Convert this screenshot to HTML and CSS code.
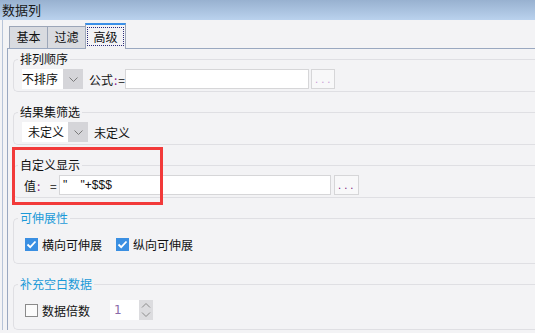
FILE: index.html
```html
<!DOCTYPE html>
<html lang="zh">
  <head>
    <meta charset="UTF-8" />
    <title>数据列</title>
    <link rel="stylesheet" href="styles.css">
  </head>
  <body>
    <div class="title">数据列</div>
    <div class="window">
      <div class="tabs">
        <div class="tab">基本</div>
        <div class="tab">过滤</div>
        <div class="tab active"><span class="focus">高级</span></div>
      </div>
      <div class="panel">
        <fieldset class="group">
          <legend>排列顺序</legend>
          <div class="row">
            <div class="combo w40">
              <span class="combo-text">不排序</span>
              <span class="combo-btn">
                <svg width="9" height="5" viewBox="0 0 9 5"><path d="M0.5 0.5 L4.5 4.5 L8.5 0.5" fill="none" stroke="#7a7a7a" stroke-width="1"/></svg>
              </span>
            </div>
            <span class="formula-label">公式<span class="colon">:</span>=</span>
            <div class="input w184"></div>
            <div class="dots light">...</div>
          </div>
        </fieldset>

        <fieldset class="group">
          <legend>结果集筛选</legend>
          <div class="row">
            <div class="combo w46">
              <span class="combo-text pad">未定义</span>
              <span class="combo-btn">
                <svg width="9" height="5" viewBox="0 0 9 5"><path d="M0.5 0.5 L4.5 4.5 L8.5 0.5" fill="none" stroke="#7a7a7a" stroke-width="1"/></svg>
              </span>
            </div>
            <span class="after-combo">未定义</span>
          </div>
        </fieldset>

        <fieldset class="group">
          <legend>自定义显示</legend>
          <div class="row">
            <span class="value-label">值<span class="colon">:</span></span>
            <span class="eq">=</span>
            <div class="input w272"><span class="input-text">"&nbsp;&nbsp;&nbsp;&nbsp;"+$$$</span></div>
            <div class="dots dark">...</div>
          </div>
        </fieldset>

        <fieldset class="group blue loose">
          <legend>可伸展性</legend>
          <div class="row">
            <span class="check on">
              <svg width="13" height="13" viewBox="0 0 13 13"><path d="M2.5 6.5 L5.2 9.2 L10.5 3.5" fill="none" stroke="#fff" stroke-width="1.8"/></svg>
            </span>
            <span class="check-label">横向可伸展</span>
            <span class="check on second">
              <svg width="13" height="13" viewBox="0 0 13 13"><path d="M2.5 6.5 L5.2 9.2 L10.5 3.5" fill="none" stroke="#fff" stroke-width="1.8"/></svg>
            </span>
            <span class="check-label">纵向可伸展</span>
          </div>
        </fieldset>

        <fieldset class="group blue loose">
          <legend>补充空白数据</legend>
          <div class="row">
            <span class="check"></span>
            <span class="check-label">数据倍数</span>
            <div class="spinner">
              <span class="spin-text">1</span>
              <span class="spin-btn">
                <svg width="14" height="20" viewBox="0 0 14 20"><path d="M3 7.5 L7 3.5 L11 7.5" fill="none" stroke="#8c8c8c"/><path d="M3 12.5 L7 16.5 L11 12.5" fill="none" stroke="#8c8c8c"/></svg>
              </span>
            </div>
          </div>
        </fieldset>
      </div>
    </div>
    <div class="marker"></div>
  </body>
</html>
```

FILE: styles.css
```css
* {
  box-sizing: border-box;
}

body {
  margin: 0px;
  width: 535px;
  height: 333px;
  overflow: hidden;
  background-color: #f3f3f5;
  font-family: "Noto Sans CJK SC", "DejaVu Sans", sans-serif;
  font-size: 12px;
  color: #111;
}

.title {
  height: 20px;
  line-height: 20px;
  padding-left: 2px;
  font-size: 13px;
  color: #1a1a1a;
  background: linear-gradient(#98b1d0, #bad2ee);
}

.window {
  margin-left: 2px;
  padding-left: 4px;
  border-left: 1px solid #b7c4d8;
}

.tabs {
  display: flex;
  align-items: flex-end;
  height: 28px;
  padding-left: 2px;
}

.tab {
  width: 39px;
  height: 22px;
  line-height: 20px;
  text-align: center;
  background-color: #d9dbe0;
  border: 1px solid #9ca6b8;
  border-bottom: none;
  margin-right: -1px;
}

.tab.active {
  width: 41px;
  height: 26px;
  padding-top: 2px;
  background-color: #f3f3f5;
  border-top: 2px solid #3b8fe6;
  margin-bottom: -1px;
  position: relative;
}

.focus {
  display: inline-block;
  width: 37px;
  height: 19px;
  line-height: 17px;
  border: 1px dotted #2a2a7a;
}

.panel {
  border-left: 1px solid #9aa8c0;
  border-top: 1px solid #9aa8c0;
  padding-top: 3px;
  padding-left: 5px;
}

/* groups run on past the right edge, so no right border */
.group {
  margin: 0px 0px 13px 0px;
  padding: 3px 8px 2px 8px;
  border: 1px solid #dfdfe3;
  border-right: none;
  border-radius: 5px 0px 0px 5px;
  min-width: 0px;
}

.group.loose {
  padding-top: 9px;
  padding-bottom: 9px;
}

.group legend {
  line-height: 14px;
  padding: 0px 2px;
  margin-left: -4px;
}

.group.blue legend {
  color: #1b9ad8;
}

.row {
  display: flex;
  align-items: center;
  height: 20px;
}

.combo {
  display: flex;
  height: 20px;
}

.combo-text {
  background-color: #fff;
  line-height: 20px;
  white-space: nowrap;
}

.combo.w40 .combo-text {
  width: 41px;
}

.combo.w46 .combo-text {
  width: 46px;
}

.combo-text.pad {
  padding-left: 6px;
}

.combo-btn {
  width: 20px;
  background-color: #d5d5d9;
  display: flex;
  align-items: center;
  justify-content: center;
}

.formula-label {
  margin-left: 6px;
  width: 36px;
  white-space: nowrap;
}

.colon {
  color: #8a1a8a;
  margin: 0px 1px;
}

.input {
  height: 20px;
  background-color: #fff;
  border: 1px solid #d6d6d8;
}

.input.w184 {
  width: 184px;
}

.input.w272 {
  width: 272px;
}

.input-text {
  display: block;
  padding-left: 3px;
  line-height: 18px;
  font-family: "Liberation Sans", sans-serif;
  font-size: 12px;
}

.dots {
  width: 24px;
  height: 20px;
  margin-left: 2px;
  padding-left: 3px;
  background-color: #f8f8f9;
  border: 1px solid #d6d6d8;
  font-family: "DejaVu Sans", sans-serif;
  font-size: 10px;
  line-height: 20px;
  letter-spacing: 3px;
}

.dots.light {
  color: #c79ad6;
}

.dots.dark {
  margin-left: 3px;
  width: 25px;
  color: #7a1a7a;
}

.after-combo {
  margin-left: 6px;
}

.value-label {
  margin-left: 2px;
  width: 26px;
}

.eq {
  width: 9px;
}

.check {
  width: 13px;
  height: 13px;
  margin-left: 3px;
  border: 1px solid #8a8a8a;
  background-color: #fbfbfb;
}

.check.on {
  border: none;
  background-color: #3a8fe2;
}

.check.on svg {
  display: block;
}

.check.second {
  margin-left: 14px;
}

.check-label {
  margin-left: 4px;
}

.spinner {
  display: flex;
  height: 20px;
  margin-left: 20px;
}

.spin-text {
  width: 29px;
  background-color: #fff;
  color: #8a6aa8;
  padding-left: 4px;
  line-height: 20px;
  font-family: "DejaVu Sans", sans-serif;
}

.spin-btn {
  width: 14px;
  background-color: #dcdcdf;
}

.spin-btn svg {
  display: block;
}

.marker {
  position: absolute;
  left: 12px;
  top: 147px;
  width: 151px;
  height: 58px;
  border: 3px solid #f23a3a;
}
```
